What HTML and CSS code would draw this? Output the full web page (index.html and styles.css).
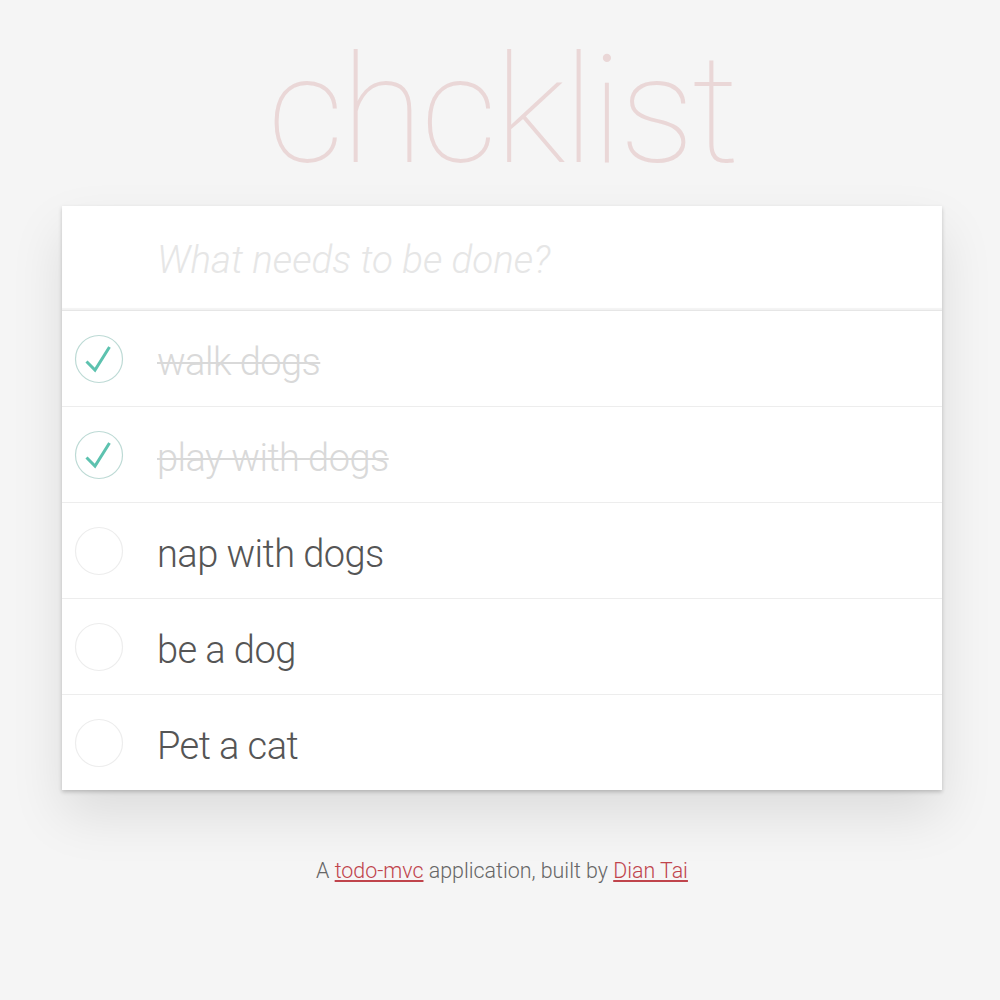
FILE: index.html
```html
<!DOCTYPE html>
<html lang="en">
<head>
<meta charset="utf-8">
<title>chcklist</title>
<link rel="stylesheet" href="styles.css">
</head>
<body>
<main class="app">
  <h1 class="title">chcklist</h1>
  <section class="card">
    <div class="new-row">
      <input class="new-todo" type="text" placeholder="What needs to be done?">
    </div>
    <ul class="list">
      <li class="item done">
        <span class="check">
          <svg width="50" height="50" viewBox="0 0 50 50"><circle cx="25" cy="25" r="23.5" fill="none" stroke="#bddad5" stroke-width="1.2"/><path d="M12.5 27.5 L21 36 L35.5 13" fill="none" stroke="#5dc2af" stroke-width="3"/></svg>
        </span>
        <span class="label">walk dogs</span>
      </li>
      <li class="item done">
        <span class="check">
          <svg width="50" height="50" viewBox="0 0 50 50"><circle cx="25" cy="25" r="23.5" fill="none" stroke="#bddad5" stroke-width="1.2"/><path d="M12.5 27.5 L21 36 L35.5 13" fill="none" stroke="#5dc2af" stroke-width="3"/></svg>
        </span>
        <span class="label">play with dogs</span>
      </li>
      <li class="item">
        <span class="check">
          <svg width="50" height="50" viewBox="0 0 50 50"><circle cx="25" cy="25" r="23.5" fill="none" stroke="#ededed" stroke-width="1.2"/></svg>
        </span>
        <span class="label">nap with dogs</span>
      </li>
      <li class="item">
        <span class="check">
          <svg width="50" height="50" viewBox="0 0 50 50"><circle cx="25" cy="25" r="23.5" fill="none" stroke="#ededed" stroke-width="1.2"/></svg>
        </span>
        <span class="label">be a dog</span>
      </li>
      <li class="item">
        <span class="check">
          <svg width="50" height="50" viewBox="0 0 50 50"><circle cx="25" cy="25" r="23.5" fill="none" stroke="#ededed" stroke-width="1.2"/></svg>
        </span>
        <span class="label">Pet a cat</span>
      </li>
    </ul>
  </section>
  <footer class="info">
    A <a href="#">todo-mvc</a> application, built by <a href="#">Dian Tai</a>
  </footer>
</main>
</body>
</html>
```

FILE: styles.css
```css
html, body {
  margin: 0;
  padding: 0;
}

body {
  background: #f5f5f5;
  font-family: Roboto, "Liberation Sans", sans-serif;
  font-weight: 300;
  color: #4d4d4d;
}

.app {
  width: 880px;
  margin-left: 62px;
}

.title {
  margin: 35px 0 20px;
  font-size: 151px;
  line-height: 1;
  font-weight: 100;
  letter-spacing: -2.9px;
  text-align: center;
  color: rgba(175, 47, 47, 0.15);
}

.card {
  background: #fff;
  box-shadow: 0 2px 4px rgba(0, 0, 0, 0.2), 0 25px 50px 0 rgba(0, 0, 0, 0.1);
}

.new-row {
  height: 104px;
  border-bottom: 1px solid #e6e6e6;
  box-shadow: inset 0 -2px 1px rgba(0, 0, 0, 0.05);
}

.new-todo {
  display: block;
  box-sizing: border-box;
  width: 100%;
  height: 104px;
  margin: 0;
  padding: 2px 0 0 95px;
  border: none;
  outline: none;
  background: transparent;
  font-family: inherit;
  font-size: 38.5px;
  font-weight: 300;
  color: #4d4d4d;
}

.new-todo::placeholder {
  font-style: italic;
  color: #e6e6e6;
}

.list {
  list-style: none;
  margin: 0;
  padding: 0;
}

.item {
  display: flex;
  align-items: center;
  height: 95px;
  border-bottom: 1px solid #ededed;
}

.item:last-child {
  border-bottom: none;
}

.check {
  display: flex;
  width: 50px;
  height: 50px;
  margin-left: 12px;
}

.label {
  margin-left: 33px;
  padding-top: 6px;
  font-size: 38px;
  letter-spacing: -0.55px;
  color: #555;
}

.done .label {
  color: #d9d9d9;
  text-decoration: line-through;
  text-decoration-thickness: 1.5px;
}

.info {
  margin-top: 68px;
  text-align: center;
  font-size: 21.4px;
  color: #666;
}

.info a {
  color: #c0444c;
  text-decoration: underline;
}
```
